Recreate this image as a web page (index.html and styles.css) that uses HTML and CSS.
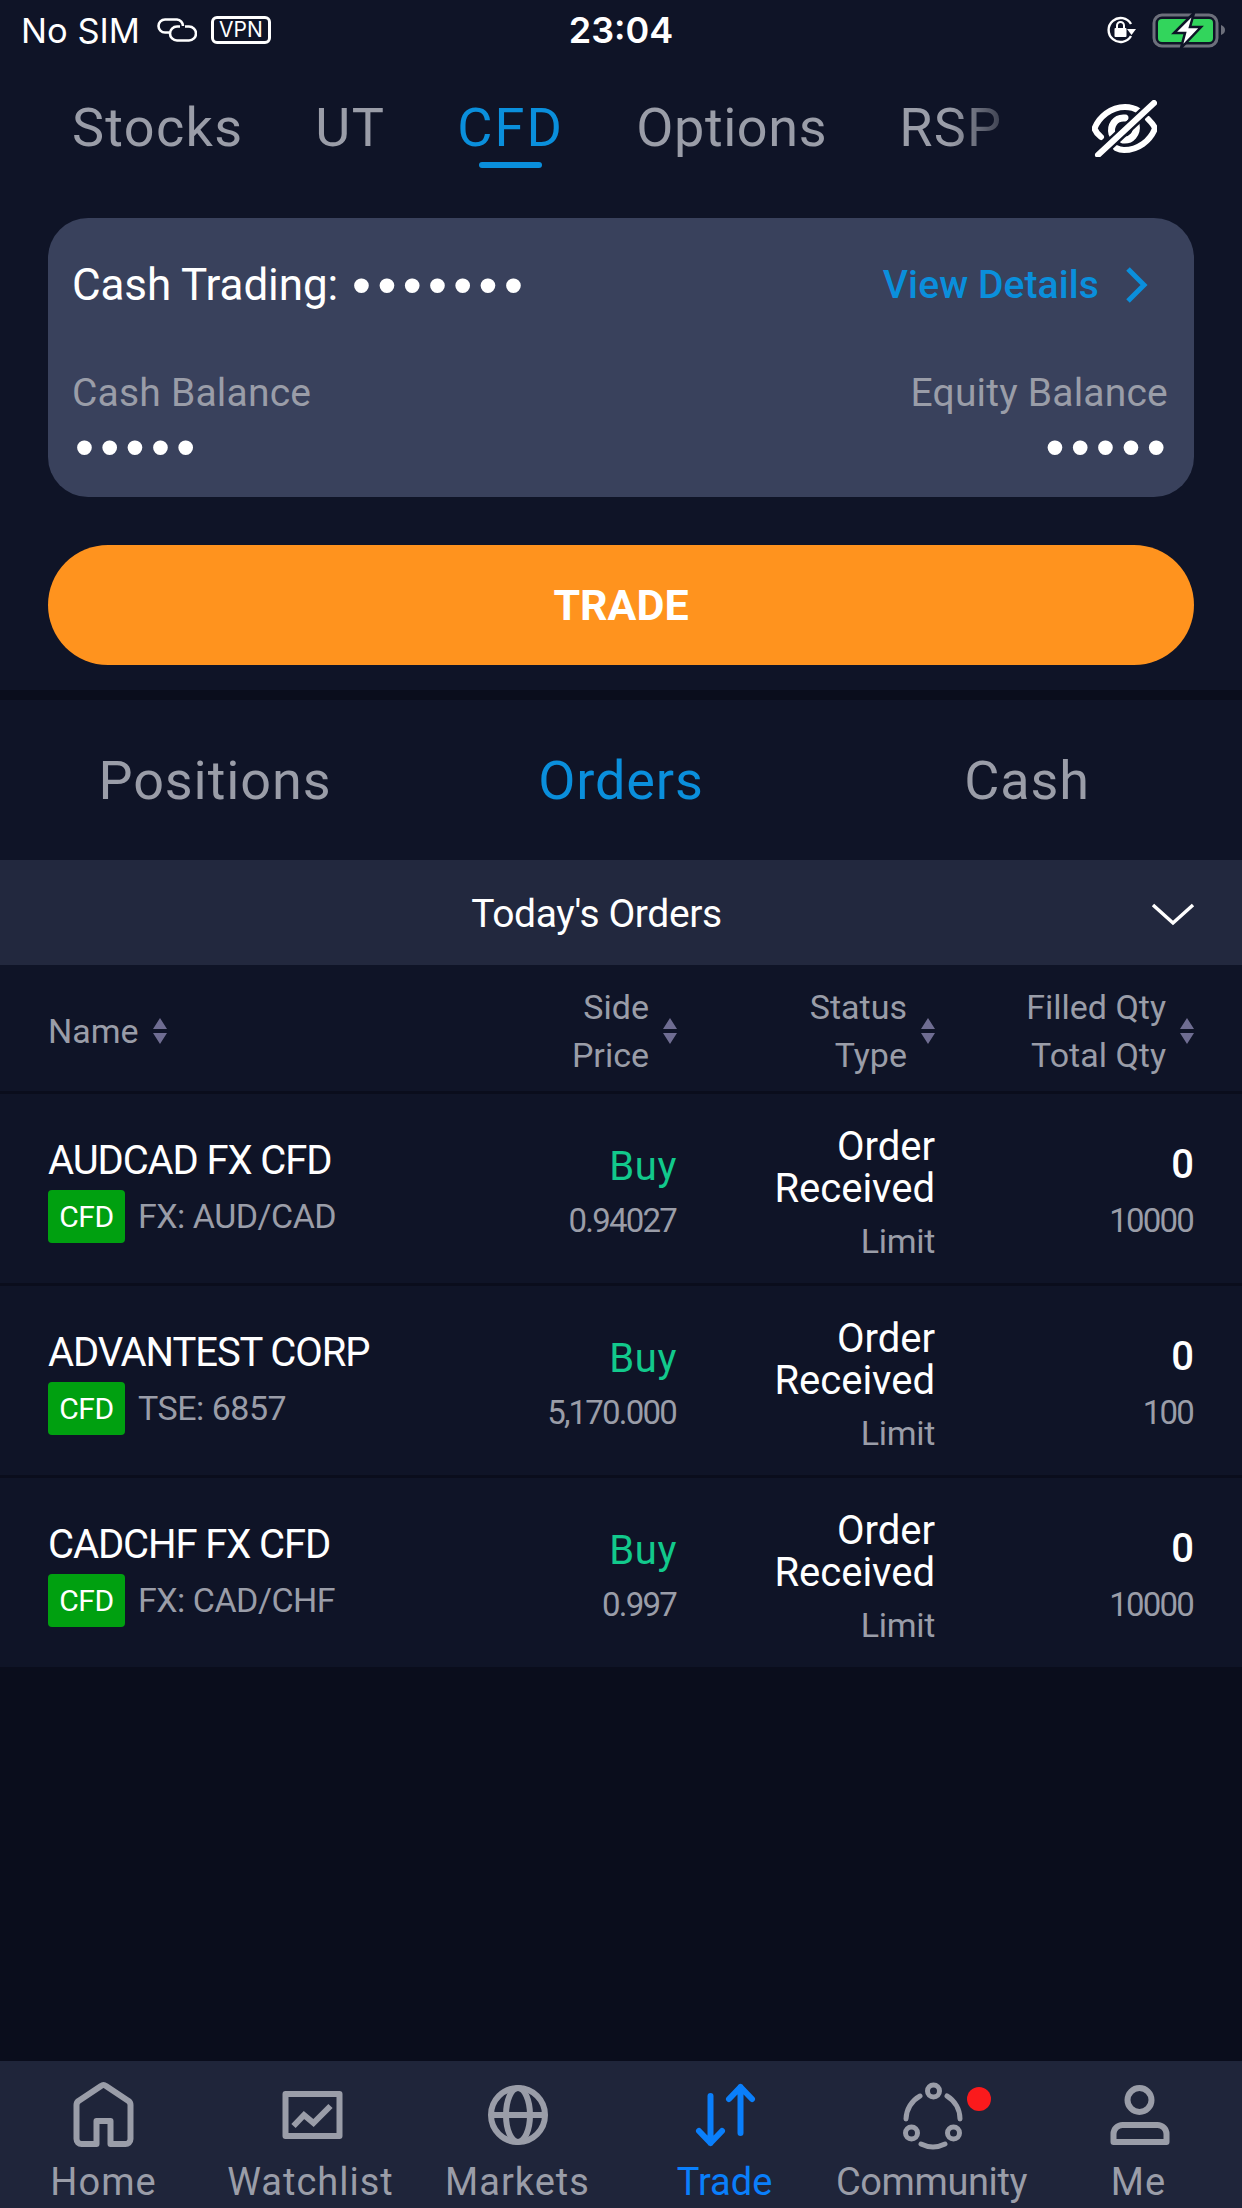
FILE: index.html
```html
<!DOCTYPE html>
<html lang="en">
<head>
<meta charset="utf-8">
<title>Trade</title>
<link rel="stylesheet" href="styles.css">
</head>
<body>
<div class="app">
  <header class="top">
    <div class="status">
      <div class="st-left">
        <span>No SIM</span>
        <svg class="ic-link" viewBox="0 0 40 24" fill="none" stroke="#fff" stroke-width="2.600"><path d="M13 14.500H8a6.500 6.500 0 0 1 0-13h12a6.500 6.500 0 0 1 6 6.500"/><path d="M28 8.500h4a7 7 0 0 1 0 14H20a7 7 0 0 1-7-7 7 7 0 0 1 7-7h3"/></svg>
        <span class="vpn">VPN</span>
      </div>
      <div class="st-time">23:04</div>
      <div class="st-right">
        <svg class="ic-lock" viewBox="0 0 32 28" fill="none"><path d="M26 20A12 12 0 1 1 26 8" stroke="#fff" stroke-width="2.400"/><path d="M22 12h9l-4.500 6z" fill="#fff" transform="translate(0 1)"/><rect x="9.500" y="12" width="12" height="9" rx="1" fill="#fff"/><path d="M12 12V9.500a3.500 3.500 0 0 1 7 0V12" stroke="#fff" stroke-width="2"/></svg>
        <svg class="ic-batt" viewBox="0 0 74 36" fill="none"><rect x="2" y="3" width="63" height="31" rx="8" stroke="#6c6f7b" stroke-width="3"/><rect x="6" y="7" width="55" height="23" rx="4" fill="#32d55c"/><path d="M69 13c3 1 4 3 4 5s-1 4-4 5z" fill="#6c6f7b"/><path d="M42 1 22 21h11l-4 15 20-21H38z" fill="#fff" stroke="#0f1427" stroke-width="2.500"/></svg>
      </div>
    </div>
    <nav class="products">
      <span class="prod">Stocks</span>
      <span class="prod">UT</span>
      <span class="prod on">CFD</span>
      <span class="prod opt">Options</span>
      <span class="prod fade">RSP</span>
      <svg class="ic-eye" viewBox="0 0 65 57" fill="none" stroke="#fff" stroke-linecap="round"><path d="M9 37C4 33 3 30 2.500 28.500 7 17 19 7 33 7c7 0 11 2 14 4M56 19c3 3 6 6 7 9.500C58 41 46 50 32 50c-3 0-6-1-8-2" stroke-width="6"/><path d="M20 34c-2-8 3-17 13-16M44 24c2 10-5 17-13 16" stroke-width="7"/><path d="M6 55 62 3" stroke="#0f1427" stroke-width="11" stroke-linecap="butt"/><path d="M6 55 62 3" stroke-width="6"/></svg>
    </nav>
    <section class="card">
      <div class="card-top">
        <div class="card-title">Cash Trading: <span class="dots dots-lg">•••••••</span></div>
        <div class="details">View Details
          <svg class="ic-next" viewBox="0 0 24 36" fill="none" stroke="#0a8fdc" stroke-width="5"><path d="m3 2 16 16L3 34"/></svg>
        </div>
      </div>
      <div class="balances">
        <div class="bal"><div class="bal-label">Cash Balance</div><div class="dots">•••••</div></div>
        <div class="bal end"><div class="bal-label">Equity Balance</div><div class="dots">•••••</div></div>
      </div>
    </section>
    <button class="trade">TRADE</button>
  </header>

  <nav class="subtabs">
    <span>Positions</span>
    <span class="on">Orders</span>
    <span>Cash</span>
  </nav>
  <div class="band">
    <div class="band-title">Today's Orders</div>
    <svg class="ic-down" viewBox="0 0 44 24" fill="none" stroke="#fff" stroke-width="3.500"><path d="m2 3 20 18L42 3"/></svg>
  </div>

  <div class="row head">
    <div class="hc first"><span>Name</span><svg class="sort" viewBox="0 0 14 26"><path d="M7 0l7 11H0zM7 26 0 15h14z"/></svg></div>
    <div class="hc"><span>Side<br>Price</span><svg class="sort" viewBox="0 0 14 26"><path d="M7 0l7 11H0zM7 26 0 15h14z"/></svg></div>
    <div class="hc"><span>Status<br>Type</span><svg class="sort" viewBox="0 0 14 26"><path d="M7 0l7 11H0zM7 26 0 15h14z"/></svg></div>
    <div class="hc"><span>Filled Qty<br>Total Qty</span><svg class="sort" viewBox="0 0 14 26"><path d="M7 0l7 11H0zM7 26 0 15h14z"/></svg></div>
  </div>

  <div class="orders">
    <article class="row order">
      <div class="o-name"><div class="nm">AUDCAD FX CFD</div><div class="mk"><span class="tag">CFD</span><span>FX: AUD/CAD</span></div></div>
      <div class="o-num"><div class="buy">Buy</div><div class="sub">0.94027</div></div>
      <div class="o-st"><div class="st">Order<br>Received</div><div class="lim">Limit</div></div>
      <div class="o-num"><div class="qty">0</div><div class="sub">10000</div></div>
    </article>
    <article class="row order">
      <div class="o-name"><div class="nm">ADVANTEST CORP</div><div class="mk"><span class="tag">CFD</span><span>TSE: 6857</span></div></div>
      <div class="o-num"><div class="buy">Buy</div><div class="sub">5,170.000</div></div>
      <div class="o-st"><div class="st">Order<br>Received</div><div class="lim">Limit</div></div>
      <div class="o-num"><div class="qty">0</div><div class="sub">100</div></div>
    </article>
    <article class="row order">
      <div class="o-name"><div class="nm">CADCHF FX CFD</div><div class="mk"><span class="tag">CFD</span><span>FX: CAD/CHF</span></div></div>
      <div class="o-num"><div class="buy">Buy</div><div class="sub">0.997</div></div>
      <div class="o-st"><div class="st">Order<br>Received</div><div class="lim">Limit</div></div>
      <div class="o-num"><div class="qty">0</div><div class="sub">10000</div></div>
    </article>
  </div>

  <div class="spacer"></div>

  <nav class="tabbar">
    <div class="tb">
      <svg viewBox="0 0 70 70" fill="none" stroke="#9a9da8" stroke-width="6" stroke-linejoin="round"><path d="M27.500 64V41h14v23H56a5 5 0 0 0 5.500-5V25a5 5 0 0 0-2-4L37 6a4 4 0 0 0-5 0L9.500 21a5 5 0 0 0-2 4v34a5 5 0 0 0 5 5z"/></svg>
      <span>Home</span>
    </div>
    <div class="tb">
      <svg viewBox="0 0 70 70" fill="none" stroke="#9a9da8" stroke-width="6"><rect x="9.500" y="14" width="54" height="42" stroke-linejoin="round"/><path d="m17.500 46 10.500-11 9.500 8 17-17"/></svg>
      <span>Watchlist</span>
    </div>
    <div class="tb">
      <svg viewBox="0 0 70 70" fill="none" stroke="#9a9da8" stroke-width="6"><circle cx="35" cy="35" r="27"/><ellipse cx="35" cy="35" rx="12" ry="27"/><path d="M8 35h54"/></svg>
      <span>Markets</span>
    </div>
    <div class="tb active">
      <svg viewBox="0 0 70 70" fill="none" stroke="#0a7ffb" stroke-width="6" stroke-linecap="round" stroke-linejoin="round"><path d="M20.500 16v47M9 51l11.500 12L32 51M50.500 53V7M39 19 50.500 7 62 19"/></svg>
      <span class="tight">Trade</span>
    </div>
    <div class="tb">
      <svg viewBox="0 0 70 70" fill="none" stroke="#9a9da8" stroke-linecap="round"><circle cx="36.500" cy="11" r="6" stroke-width="5"/><circle cx="14.500" cy="53" r="6" stroke-width="5"/><circle cx="56.500" cy="53" r="6" stroke-width="5"/><path d="M23 16A27 27 0 0 0 9 39M50 16a27 27 0 0 1 13 23M24 64a27 27 0 0 0 24 0" stroke-width="5"/></svg>
      <span class="tighter">Community</span>
      <i class="badge"></i>
    </div>
    <div class="tb">
      <svg viewBox="0 0 70 70" fill="none" stroke="#9a9da8" stroke-width="6" stroke-linejoin="round"><circle cx="35.500" cy="20" r="12"/><path d="M9.500 62v-8a9 9 0 0 1 9-9h35a9 9 0 0 1 9 9v8z"/></svg>
      <span>Me</span>
    </div>
  </nav>
</div>
</body>
</html>
```
FILE: styles.css
```css
* { box-sizing: border-box; }
html, body { margin: 0; padding: 0; }
body { background: #0a0d1c; font-family: Roboto, "Liberation Sans", sans-serif; color: #fff; }
.app { width: 1242px; height: 2208px; display: flex; flex-direction: column; overflow: hidden; }

.top { background: #0f1427; height: 690px; display: flex; flex-direction: column; }
.status { height: 60px; display: grid; grid-template-columns: 1fr auto 1fr; align-items: center; padding: 0 16px; font-family: Inter, "Liberation Sans", sans-serif; font-size: 34.500px; }
.st-left { display: flex; align-items: center; padding-left: 5px; }
.ic-link { width: 40px; height: 24px; margin-left: 17px; }
.vpn { width: 60px; height: 28px; border: 3px solid #fff; border-radius: 6px; font-size: 21px; line-height: 22px; text-align: center; margin-left: 14px; }
.st-time { font-weight: 600; font-size: 36px; }
.st-right { display: flex; justify-content: flex-end; align-items: center; gap: 15px; }
.ic-lock { width: 32px; height: 28px; }
.ic-batt { width: 74px; height: 36px; }

.products { height: 136px; padding-left: 72px; display: flex; align-items: center; font-size: 54px; color: #9a9da8; letter-spacing: 1.300px; }
.prod { margin-right: 72px; position: relative; line-height: 64px; }
.prod.on { color: #0a8fdc; letter-spacing: 2.200px; }
.prod.opt { letter-spacing: .6px; }
.prod.on::after { content: ""; position: absolute; left: 22px; right: 22px; bottom: -8px; height: 6px; border-radius: 3px; background: #0a8fdc; }
.prod.fade { background: linear-gradient(90deg, #9a9da8 50%, #3c4050 100%); -webkit-background-clip: text; background-clip: text; color: transparent; margin-right: 0; }
.ic-eye { width: 65px; height: 57px; margin-left: 90px; }

.card { margin: 22px 48px 0; height: 279px; border-radius: 40px; background: #39415c; padding: 41px 26px 0 24px; }
.card-top { display: flex; justify-content: space-between; align-items: center; height: 52px; padding-right: 19px; }
.card-title { font-size: 44px; display: flex; align-items: center; gap: 14px; white-space: nowrap; letter-spacing: -.1px; }
.details { font-size: 39px; font-weight: 500; color: #0a8fdc; display: flex; align-items: center; gap: 26px; letter-spacing: .1px; }
.ic-next { width: 24px; height: 36px; }
.balances { display: flex; justify-content: space-between; margin-top: 59px; }
.bal-label { font-size: 39px; color: #9a9da8; line-height: 46px; letter-spacing: .2px; }
.bal.end { text-align: right; }
.dots { font-family: "Liberation Sans", sans-serif; font-size: 54px; line-height: 46px; letter-spacing: 6.400px; color: #fff; margin: 8px 0 0 3px; }
.bal.end .dots { margin: 8px -4px 0 0; }
.dots-lg { margin: 0; }

.trade { margin: 48px 48px 0; height: 120px; border: 0; border-radius: 60px; background: #ff931e; color: #fff; font-family: Roboto, sans-serif; font-weight: 700; font-size: 43px; }

.subtabs { margin-top: 10px; height: 160px; background: #0f1427; display: grid; grid-template-columns: repeat(3, 406px); padding: 0 12px; align-items: center; text-align: center; font-size: 54px; letter-spacing: .9px; color: #9a9da8; }
.subtabs .on { color: #0a8fdc; }

.band { height: 105px; background: #22283e; display: grid; grid-template-columns: 1fr auto; align-items: center; padding: 2px 47px 0 42px; text-align: center; font-size: 39px; letter-spacing: -.4px; }
.ic-down { width: 44px; height: 24px; }

.row { display: grid; grid-template-columns: 450px 179px 258px 259px; padding: 0 48px; background: #0f1427; }
.head { height: 126px; padding-top: 6px; align-items: center; font-size: 34px; line-height: 48px; color: #9a9da8; }
.hc { display: flex; justify-content: flex-end; align-items: center; text-align: right; gap: 14px; }
.hc.first { justify-content: flex-start; }
.sort { width: 14px; height: 26px; fill: #6f6d92; }

.orders { display: flex; flex-direction: column; gap: 3px; padding-top: 3px; }
.order { height: 189px; padding-top: 6px; align-items: center; }
.o-name { margin-top: -3px; }
.nm { font-size: 40px; line-height: 46px; letter-spacing: -1.100px; }
.mk { display: flex; align-items: center; gap: 13px; margin-top: 6px; font-size: 34px; color: #9a9da8; letter-spacing: -.5px; }
.tag { width: 77px; height: 53px; line-height: 53px; text-align: center; border-radius: 4px; background: #00a010; color: #fff; font-size: 30px; letter-spacing: -.5px; }
.o-num { text-align: right; }
.buy, .qty { font-size: 40px; line-height: 46px; }
.qty { font-weight: 500; }
.buy { color: #12c98c; letter-spacing: .6px; padding-top: 2px; margin-bottom: -2px; }
.sub { font-size: 33px; line-height: 42px; color: #9a9da8; margin: 12px 1px 0 0; letter-spacing: -1.800px; }
.o-st { text-align: right; padding-top: 4px; }
.st { font-size: 40px; line-height: 42px; }
.lim { font-size: 34px; line-height: 42px; color: #9a9da8; margin-top: 10px; letter-spacing: -.3px; }

.spacer { flex: 1; background: #0a0d1c; }
.tabbar { height: 147px; background: #1f253a; display: grid; grid-template-columns: repeat(6, 207px); }
.tb { position: relative; display: flex; flex-direction: column; align-items: center; padding-top: 19px; color: #9a9da8; font-size: 38px; letter-spacing: 1px; }
.tb svg { width: 70px; height: 70px; display: block; }
.tb span { line-height: 44px; margin-top: 10px; white-space: nowrap; }
.tb .tight { letter-spacing: 0; }
.tb .tighter { letter-spacing: -.4px; }
.tb.active { color: #0a7ffb; }
.badge { position: absolute; left: 139px; top: 26px; width: 24px; height: 24px; border-radius: 50%; background: #fb1a1c; }
```
